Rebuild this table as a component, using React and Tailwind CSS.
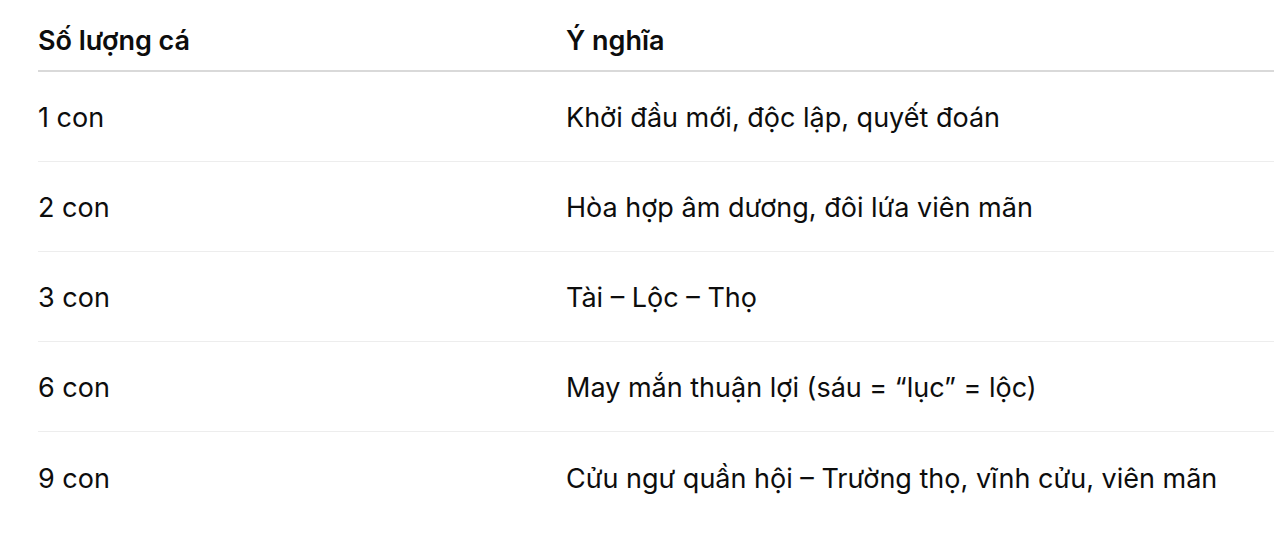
const rows = [
  ['1 con', 'Khởi đầu mới, độc lập, quyết đoán'],
  ['2 con', 'Hòa hợp âm dương, đôi lứa viên mãn'],
  ['3 con', 'Tài – Lộc – Thọ'],
  ['6 con', 'May mắn thuận lợi (sáu = “lục” = lộc)'],
  ['9 con', 'Cửu ngư quần hội – Trường thọ, vĩnh cửu, viên mãn'],
];

export default function App() {
  return (
    <div className="min-h-[536px] bg-white pl-[38px] text-[27px] leading-[36px] text-[#0d0d0d] font-['Inter','Noto_Sans',sans-serif] overflow-hidden">
      <div className="grid grid-cols-[528px_1fr] h-[72px] pt-[23px] border-b-2 border-[#d9d9d9] font-semibold">
        <div>Số lượng cá</div>
        <div>Ý nghĩa</div>
      </div>
      {rows.map(([count, meaning], i) => (
        <div
          key={count}
          className={
            i < rows.length - 1
              ? 'grid grid-cols-[528px_1fr] h-[90px] pt-[3px] items-center border-b border-[#ededed]'
              : 'grid grid-cols-[528px_1fr] h-[90px] pt-[3px] items-center'
          }
        >
          <div>{count}</div>
          <div>{meaning}</div>
        </div>
      ))}
    </div>
  );
}
